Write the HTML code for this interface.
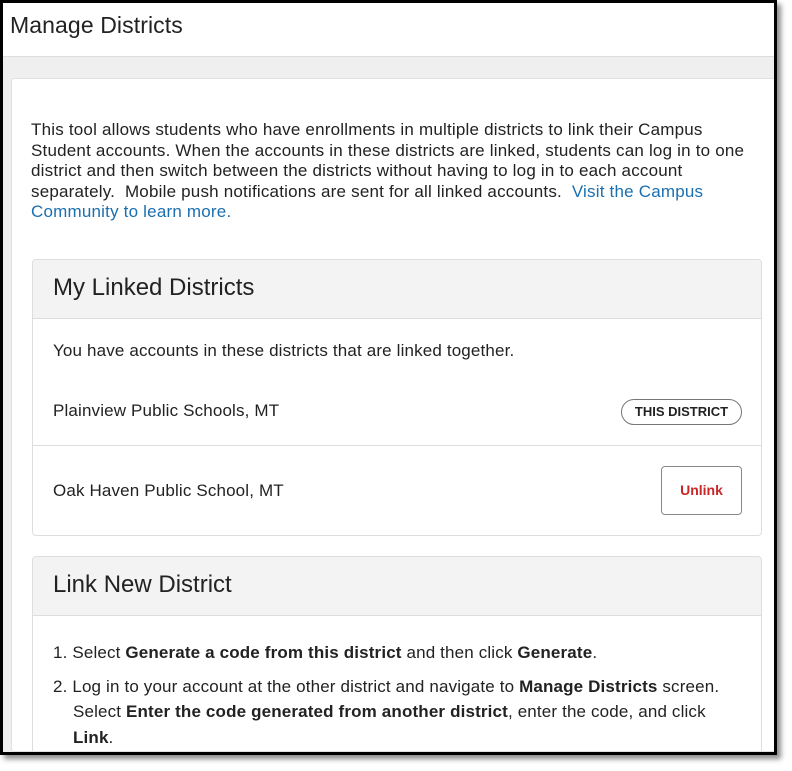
<!DOCTYPE html>
<html><head><meta charset="utf-8"><style>
*{margin:0;padding:0;box-sizing:border-box}
body{width:792px;height:771px;background:#fff;font-family:"Liberation Sans",Arial,sans-serif;color:#222;position:relative;overflow:hidden}
.frame{position:absolute;left:0;top:0;width:777px;height:755px;border:3px solid #000;background:#efefef;overflow:hidden;box-shadow:4px 4px 5px rgba(0,0,0,0.45)}
.hdr{position:absolute;left:0;top:0;right:0;height:54px;background:#fff;border-bottom:1px solid #ddd}
.hdr h1{position:absolute;left:7px;top:9px;font-size:23px;font-weight:normal;letter-spacing:0.1px;color:#222}
.card{position:absolute;left:8px;top:75px;width:766px;height:674px;background:#fff;border:1px solid #e0e0e0;border-radius:3px;overflow:hidden}
.intro{position:absolute;left:19px;top:41px;font-size:17px;line-height:20.5px;letter-spacing:0.2px;white-space:nowrap}
.intro a{color:#1a6fb0;text-decoration:none}
.panel{position:absolute;left:20px;width:730px;border:1px solid #ddd;border-radius:4px;background:#fff;overflow:hidden}
.ph{height:59px;background:#f3f3f3;border-bottom:1px solid #ddd;font-size:24px;padding:14px 20px;letter-spacing:0}
.t{position:absolute;left:20px;font-size:17px;letter-spacing:0.15px;white-space:nowrap}
.pill{position:absolute;left:588px;width:121px;height:26px;border:1px solid #777;border-radius:13px;font-size:13px;font-weight:bold;text-align:center;line-height:24px}
.btn{position:absolute;left:628px;width:81px;height:49px;border:1px solid #888;border-radius:4px;font-size:14px;font-weight:bold;color:#c62828;text-align:center;line-height:47px}
.ol{position:absolute;left:20px;top:83px;font-size:17px;letter-spacing:0.15px;line-height:25.5px;white-space:nowrap}
</style></head><body>
<div class="frame">
<div class="hdr"><h1>Manage Districts</h1></div>
<div class="card">
<div class="intro">This tool allows students who have enrollments in multiple districts to link their Campus<br>Student accounts. When the accounts in these districts are linked, students can log in to one<br>district and then switch between the districts without having to log in to each account<br>separately.&nbsp; Mobile push notifications are sent for all linked accounts.&nbsp; <a>Visit the Campus</a><br><a>Community to learn more.</a></div>
<div class="panel" style="top:180px;height:277px">
<div class="ph">My Linked Districts</div>
<div class="t" style="top:81px">You have accounts in these districts that are linked together.</div>
<div class="t" style="top:141px">Plainview Public Schools, MT</div>
<div class="pill" style="top:139px">THIS DISTRICT</div>
<div style="position:absolute;left:0;right:0;top:185px;border-top:1px solid #ddd"></div>
<div class="t" style="top:221px">Oak Haven Public School, MT</div>
<div class="btn" style="top:206px">Unlink</div>
</div>
<div class="panel" style="top:477px;height:220px">
<div class="ph">Link New District</div>
<div class="ol">1. Select <b>Generate a code from this district</b> and then click <b>Generate</b>.<br>
<div style="height:8px"></div>
2. Log in to your account at the other district and navigate to <b>Manage Districts</b> screen.<br>
<span style="padding-left:20px">Select <b>Enter the code generated from another district</b>, enter the code, and click</span><br>
<span style="padding-left:20px"><b>Link</b>.</span></div>
</div>
</div>
</div>
</body></html>
